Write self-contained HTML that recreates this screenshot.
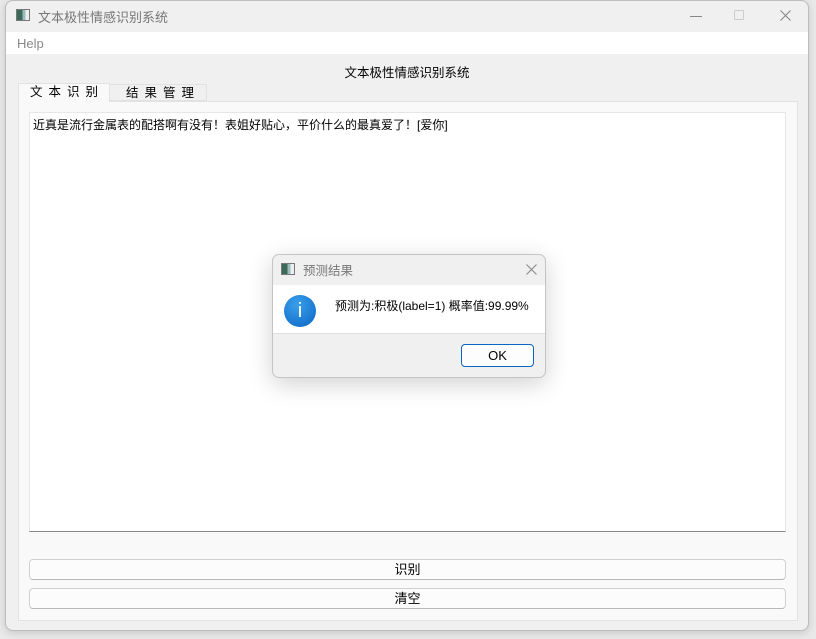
<!DOCTYPE html>
<html><head><meta charset="utf-8"><style>
*{margin:0;padding:0;box-sizing:border-box}
body{width:816px;height:639px;background:#e9e9e9;position:relative;overflow:hidden;font-family:"Liberation Sans","Noto Sans CJK SC",sans-serif;font-size:13px;color:#000}
.abs{position:absolute}
#win{left:5px;top:0;width:804px;height:631px;background:#f0f0f0;border:1px solid #bcbcbc;border-radius:8px;overflow:hidden;box-shadow:0 2px 8px rgba(0,0,0,.15)}
.btn{background:#fcfcfc;border:1px solid #d0d0d0;border-bottom-color:#b8b8b8;border-radius:4px;text-align:center;line-height:19px;font-size:13px}
</style></head><body>
<div id="win" class="abs">
 <div class="abs" style="left:10px;top:8px;width:14px;height:12px;border:1px solid #777;background:linear-gradient(90deg,#3b6a5a 0 45%,#9bb 45% 70%,#eee 70%)"></div>
 <div class="abs" style="left:32px;top:6px;color:#777;font-size:13px">文本极性情感识别系统</div>
 <div class="abs" style="left:684px;top:15px;width:12px;border-top:1px solid #888"></div>
 <div class="abs" style="left:728px;top:9px;width:10px;height:10px;border:1px solid #ccc;border-radius:1px"></div>
 <svg class="abs" style="left:774px;top:9px" width="11" height="11"><path d="M0.5 0.5L10.5 10.5M10.5 0.5L0.5 10.5" stroke="#888" stroke-width="1.1"/></svg>
 <div class="abs" style="left:0;top:31px;width:802px;height:22px;background:#fff"></div>
 <div class="abs" style="left:11px;top:35px;color:#888">Help</div>
 <div class="abs" style="left:0;top:61px;width:802px;text-align:center;font-size:12.5px">文本极性情感识别系统</div>
 <div class="abs" style="left:12px;top:100px;width:780px;height:520px;background:#f9f9f9;border:1px solid #e2e2e2"></div>
 <div class="abs" style="left:12px;top:82px;width:92px;height:19px;background:#f9f9f9;border:1px solid #e2e2e2;border-bottom:none;letter-spacing:6px;padding-left:11px;line-height:17px;font-size:12.5px">文本识别</div>
 <div class="abs" style="left:103px;top:83px;width:98px;height:17px;background:#f0f0f0;border:1px solid #e2e2e2;letter-spacing:6px;padding-left:16px;line-height:16px;font-size:12.5px">结果管理</div>
 <div class="abs" style="left:23px;top:111px;width:757px;height:420px;background:#fff;border:1px solid #e6e6e6;border-bottom:1px solid #888"></div>
 <div class="abs" style="left:27px;top:115px;font-size:12px">近真是流行金属表的配搭啊有没有！表姐好贴心，平价什么的最真爱了！[爱你]</div>
 <div class="abs btn" style="left:23px;top:558px;width:757px;height:21px">识别</div>
 <div class="abs btn" style="left:23px;top:587px;width:757px;height:21px">清空</div>
</div>
<div class="abs" style="left:272px;top:254px;width:274px;height:124px;background:#f0f0f0;border:1px solid #c4c4c4;border-radius:7px;overflow:hidden;box-shadow:0 6px 24px rgba(0,0,0,.18)">
 <div class="abs" style="left:8px;top:8px;width:14px;height:12px;border:1px solid #777;background:linear-gradient(90deg,#3b6a5a 0 45%,#9bb 45% 70%,#eee 70%)"></div>
 <div class="abs" style="left:30px;top:5px;color:#777;font-size:12.5px">预测结果</div>
 <svg class="abs" style="left:253px;top:9px" width="11" height="11"><path d="M0.5 0.5L10.5 10.5M10.5 0.5L0.5 10.5" stroke="#888" stroke-width="1.1"/></svg>
 <div class="abs" style="left:0;top:30px;width:274px;height:49px;background:#fff;border-bottom:1px solid #e0e0e0"></div>
 <div class="abs" style="left:11px;top:40px;width:32px;height:32px;border-radius:50%;background:radial-gradient(circle at 40% 30%,#3aa0ea,#0a64c4);color:#fff;text-align:center;font:20px/32px 'Liberation Sans'">i</div>
 <div class="abs" style="left:62px;top:42px;font-size:12px">预测为:积极(label=1) 概率值:99.99%</div>
 <div class="abs" style="left:188px;top:89px;width:73px;height:23px;background:#fdfdfd;border:1px solid #0a64c4;border-radius:4px;text-align:center;line-height:21px">OK</div>
</div>
</body></html>
